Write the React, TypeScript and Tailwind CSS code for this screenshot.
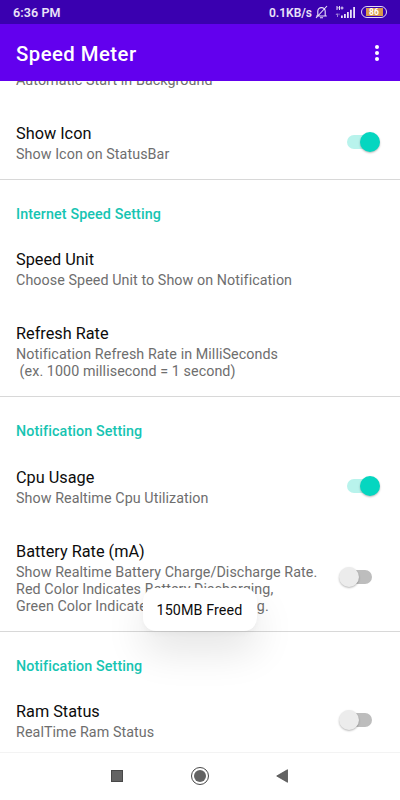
import { useState } from 'react';
import clsx from 'clsx';

type Item = {
  title: string;
  summary: string[];
  checked?: boolean;
  className?: string;
};

type Section = {
  category?: string;
  items: Item[];
};

const sections: Section[] = [
  {
    items: [
      { title: 'Auto Start', summary: ['Automatic Start in Background'], className: 'pt-[18px] pb-4' },
      { title: 'Show Icon', summary: ['Show Icon on StatusBar'], checked: true, className: 'pt-[18px] pb-4' },
    ],
  },
  {
    category: 'Internet Speed Setting',
    items: [
      { title: 'Speed Unit', summary: ['Choose Speed Unit to Show on Notification'] },
      {
        title: 'Refresh Rate',
        summary: ['Notification Refresh Rate in MilliSeconds', ' (ex. 1000 millisecond = 1 second)'],
        className: 'pt-[17px] pb-4',
      },
    ],
  },
  {
    category: 'Notification Setting',
    items: [
      {
        title: 'Cpu Usage',
        summary: ['Show Realtime Cpu Utilization'],
        checked: true,
        className: 'pt-[18px] pb-4',
      },
      {
        title: 'Battery Rate (mA)',
        summary: [
          'Show Realtime Battery Charge/Discharge Rate.',
          'Red Color Indicates Battery Discharging,',
          'Green Color Indicates Battery Charging.',
        ],
        checked: false,
        className: 'pt-[18px] pb-4',
      },
    ],
  },
  {
    category: 'Notification Setting',
    items: [{ title: 'Ram Status', summary: ['RealTime Ram Status'], checked: false }],
  },
];

function Toggle({ initial }: { initial: boolean }) {
  const [on, setOn] = useState(initial);

  return (
    <button
      role="switch"
      aria-checked={on}
      onClick={() => setOn(!on)}
      className="grid items-center w-[41px] h-[21px] shrink-0 -mt-[3px]"
    >
      <span
        className={clsx(
          'col-start-1 row-start-1 justify-self-center w-[25px] h-[14px] rounded-full',
          on ? 'bg-[#b8f3ec]' : 'bg-[#bdbdbd]'
        )}
      />
      <span
        className={clsx(
          'col-start-1 row-start-1 z-10 size-5 rounded-full shadow-[0_1px_2px_rgba(0,0,0,0.28)]',
          on ? 'justify-self-end bg-[#05d6c0]' : 'justify-self-start bg-[#ececec]'
        )}
      />
    </button>
  );
}

function StatusBar() {
  return (
    <div className="flex items-center h-6 shrink-0 bg-[#3a00b0] px-[13px] text-[#e9e2f8] text-[12.5px] font-semibold">
      <span className="grow pt-0.5 tracking-[0.1px]">6:36 PM</span>
      <span className="pt-0.5 text-[12px]">0.1KB/s</span>
      <svg className="ml-[3px] w-[13px] h-[14px]" viewBox="0 0 13 14" fill="none" stroke="currentColor" strokeWidth="1.1">
        <path d="M1.2 11h10.600M2.800 10.800V6.300a3.700 3.700 0 0 1 7.400 0v4.500M5 12.700h3M12 1 1 13" />
      </svg>
      <svg className="ml-[7px] w-[21px] h-[14px]" viewBox="0 0 21 14" fill="currentColor">
        <path d="M1.500 1h1v1.500h1.500V1h1v4H4V3.300H2.500V5h-1zM6.500 1.500h1v1h1v1h-1v1h-1v-1h-1v-1h1z" />
        <path d="M2 8.500h.8V12H2zM.5 9.800 2 8.300v1.500zM3.600 8.500h.8v1.700h-.8z" opacity=".7" />
        <path d="M6 10.500h1.800V13H6zM9 9h1.800v4H9zM12 7h1.800v6H12zM15 4.700h1.800V13H15zM18.200 2H20v11h-1.800z" />
      </svg>
      <span className="ml-[5px] flex items-center w-[26px] h-[12px] rounded-full border border-[#e2d8f6] px-[3.5px]">
        <span className="flex items-center justify-center w-full h-[8px] bg-[#d99a4a] text-[8.5px] leading-none font-bold text-white">
          86
        </span>
      </span>
    </div>
  );
}

function AppBar() {
  return (
    <header className="flex items-center justify-between h-[57px] shrink-0 bg-[#6200ee] pl-4 pr-[21px] text-white">
      <h1 className="text-[20.3px] font-medium tracking-[0.48px] pt-[3px]">Speed Meter</h1>
      <button aria-label="More options" className="flex flex-col gap-[2px]">
        <span className="size-1 rounded-full bg-white" />
        <span className="size-1 rounded-full bg-white" />
        <span className="size-1 rounded-full bg-white" />
      </button>
    </header>
  );
}

function Preference({ item }: { item: Item }) {
  return (
    <div className={clsx('flex items-center pl-4 pr-5', item.className ?? 'py-[17px]')}>
      <div className="grow whitespace-pre">
        <p className="text-[16.300px] leading-[21px] text-[#0c0c0c]">{item.title}</p>
        <div className="mt-0.5 text-[14.3px] leading-[17px] tracking-[0.07px] text-[#6e6e6e]">
          {item.summary.map((line) => (
            <p key={line}>{line}</p>
          ))}
        </div>
      </div>
      {item.checked !== undefined && <Toggle initial={item.checked} />}
    </div>
  );
}

export default function App() {
  return (
    <div className="relative flex flex-col w-full h-screen overflow-hidden bg-white font-['Roboto',sans-serif]">
      <StatusBar />
      <AppBar />
      <main className="grow min-h-0 overflow-hidden">
        <div className="-mt-[50px]">
          {sections.map((section, i) => (
            <section key={i} className={clsx(i > 0 && 'border-t border-[#d8d8d8]')}>
              {section.category && (
                <h2 className="h-[52px] pl-4 pt-[25px] text-[14.3px] leading-[18px] tracking-[0.11px] font-medium text-[#16c4b2]">
                  {section.category}
                </h2>
              )}
              {section.items.map((item) => (
                <Preference key={item.title} item={item} />
              ))}
            </section>
          ))}
        </div>
      </main>

      <nav className="grid grid-cols-[76px_90px_74px] justify-center items-center justify-items-center h-12 shrink-0 border-t border-[#f3f3f3] bg-white pb-0.5 pr-0.5">
        <span className="size-3 bg-[#636363] border border-[#484848]" />
        <span className="flex items-center justify-center size-[18px] rounded-full border-[1.5px] border-[#484848]">
          <span className="size-3 rounded-full bg-[#636363]" />
        </span>
        <svg className="w-[12px] h-[14px]" viewBox="0 0 12 14">
          <path d="M.7 7 11.500.7v12.600z" fill="#636363" stroke="#484848" strokeWidth=".7" />
        </svg>
      </nav>

      <div className="absolute left-[142.5px] top-[588px] flex items-center justify-center w-[114px] h-[43px] pt-0.5 rounded-[13px] bg-white text-[14.3px] tracking-[0.1px] text-[#0c0c0c] shadow-[0_20px_40px_rgba(0,0,0,0.11),0_2px_6px_rgba(0,0,0,0.04)]">
        150MB Freed
      </div>
    </div>
  );
}
